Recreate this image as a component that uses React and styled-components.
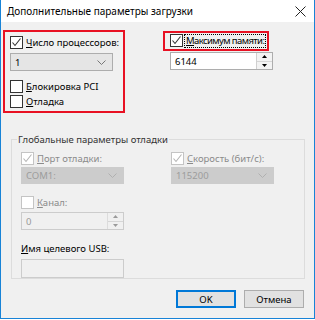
import React from "react";
import styled, { createGlobalStyle } from "styled-components";

const Global = createGlobalStyle`
  html, body { margin: 0; padding: 0; background: #ffffff; }
  body {
    font-family: "Noto Sans", "Liberation Sans", sans-serif;
    font-size: 9.5px;
    line-height: 13px;
    color: #000;
  }
`;

const Window = styled.div`
  width: 315px;
  height: 319px;
  box-sizing: border-box;
  border: 1px solid #1883d7;
  border-top: none;
  display: flex;
  flex-direction: column;
  background: #f0f0f0;
`;

const TitleBar = styled.div`
  height: 22px;
  background: #ffffff;
  display: flex;
  align-items: center;
  justify-content: space-between;
  padding: 0 8px 0 6px;
  font-size: 10px;
  color: #000;
  .close {
    display: flex;
  }
`;

const Body = styled.div`
  flex: 1;
  display: flex;
  flex-direction: column;
  padding: 8px 9px 0 2px;
`;

const TopRow = styled.div`
  display: flex;
  align-items: flex-start;
  gap: 38px;
`;

const Highlight = styled.div`
  border: 2px solid #e81123;
  box-sizing: border-box;
  width: ${(p) => p.$w}px;
  height: ${(p) => p.$h}px;
  padding: ${(p) => p.$pad};
  display: flex;
  flex-direction: column;
`;

const RightCol = styled.div`
  display: flex;
  flex-direction: column;
  padding-top: 1px;
`;

const CheckRow = styled.label`
  display: flex;
  align-items: center;
  height: 15px;
  margin-top: ${(p) => p.$mt || 0}px;
  color: ${(p) => (p.$disabled ? "#8b8b8b" : "#000")};
  white-space: nowrap;
  u {
    text-decoration: underline;
  }
  .text {
    padding: 0 1px;
    margin-left: 1px;
    border: 1px dotted ${(p) => (p.$focus ? "#000" : "transparent")};
    line-height: 12px;
    letter-spacing: ${(p) => (p.$tight ? "-0.6px" : "0")};
  }
`;

const Box = styled.span`
  width: 13px;
  height: 13px;
  box-sizing: border-box;
  border: 1px solid ${(p) => (p.$disabled ? "#c4c4c4" : "#333333")};
  background: #ffffff;
  display: inline-flex;
  align-items: center;
  justify-content: center;
  flex-shrink: 0;
`;

const Combo = styled.div`
  width: ${(p) => p.$w || 103}px;
  height: ${(p) => p.$h || 18}px;
  box-sizing: border-box;
  margin-top: ${(p) => p.$mt || 0}px;
  margin-left: ${(p) => p.$ml || 0}px;
  border: 1px solid ${(p) => (p.$disabled ? "#cccccc" : "#adadad")};
  background: ${(p) => (p.$disabled ? "#cccccc" : "#e5e5e5")};
  color: ${(p) => (p.$disabled ? "#9c9c9c" : "#000")};
  display: flex;
  align-items: center;
  justify-content: space-between;
  padding: 0 6px 0 4px;
`;

const Spin = styled.div`
  width: ${(p) => p.$w || 103}px;
  height: 18px;
  box-sizing: border-box;
  margin-top: ${(p) => p.$mt || 0}px;
  margin-left: ${(p) => p.$ml || 0}px;
  border: 1px solid ${(p) => (p.$disabled ? "#cccccc" : "#adadad")};
  background: ${(p) => (p.$disabled ? "#f0f0f0" : "#ffffff")};
  color: ${(p) => (p.$disabled ? "#9a9a9a" : "#000")};
  display: flex;
  align-items: stretch;
  .value {
    flex: 1;
    display: flex;
    align-items: center;
    padding-left: 4px;
  }
  .arrows {
    width: 15px;
    display: flex;
    flex-direction: column;
    border-left: 1px solid ${(p) => (p.$disabled ? "#dcdcdc" : "#d0d0d0")};
  }
`;

const SpinBtn = styled.span`
  flex: 1;
  display: flex;
  align-items: center;
  justify-content: center;
  background: ${(p) => (p.$disabled ? "#f0f0f0" : "#f3f3f3")};
  & + & {
    border-top: 1px solid #d6d6d6;
  }
`;

const Group = styled.fieldset`
  margin: 20px 0 0 8px;
  padding: 5px 0 0 9px;
  height: 146px;
  box-sizing: border-box;
  border: 1px solid #dcdcdc;
  legend {
    padding: 0 1px;
    margin-left: -4px;
    color: #333;
  }
`;

const GroupGrid = styled.div`
  display: grid;
  grid-template-columns: 150px 110px;
`;

const Col = styled.div`
  display: flex;
  flex-direction: column;
`;

const FieldLabel = styled.div`
  margin-top: ${(p) => p.$mt || 0}px;
  height: 15px;
  display: flex;
  align-items: center;
  color: #000;
  u { text-decoration: underline; }
`;

const TextBox = styled.div`
  width: 103px;
  height: 19px;
  box-sizing: border-box;
  margin-top: 3px;
  border: 1px solid #cccccc;
  background: #f0f0f0;
`;

const ButtonRow = styled.div`
  display: flex;
  justify-content: flex-end;
  gap: 8px;
  margin-top: 11px;
  padding-right: 1px;
`;

const Button = styled.button`
  width: 60px;
  height: 18px;
  box-sizing: border-box;
  padding: 0;
  font-family: inherit;
  font-size: 9.5px;
  color: #000;
  background: #e1e1e1;
  border: ${(p) => (p.$primary ? "2px solid #0078d7" : "1px solid #adadad")};
`;

const Check = ({ checked, disabled }) => (
  <Box $disabled={disabled}>
    {checked && (
      <svg width="11" height="11" viewBox="0 0 11 11">
        <path
          d="M1.5 5.5 L4 8.5 L9.5 1.5"
          fill="none"
          stroke={disabled ? "#b5b5b5" : "#333333"}
          strokeWidth="1.1"
        />
      </svg>
    )}
  </Box>
);

const Chevron = ({ disabled }) => (
  <svg width="9" height="5" viewBox="0 0 9 5">
    <path d="M0.5 0.5 L4.5 4.5 L8.5 0.5" fill="none" stroke={disabled ? "#b0b0b0" : "#777"} strokeWidth="1" />
  </svg>
);

const Tri = ({ up, disabled }) => (
  <svg width="5" height="3" viewBox="0 0 5 3">
    <path d={up ? "M0 3 L2.5 0 L5 3 Z" : "M0 0 L5 0 L2.5 3 Z"} fill={disabled ? "#9a9a9a" : "#000"} />
  </svg>
);

const SpinField = ({ value, disabled, ...rest }) => (
  <Spin $disabled={disabled} {...rest}>
    <span className="value">{value}</span>
    <span className="arrows">
      <SpinBtn $disabled={disabled}><Tri up disabled={disabled} /></SpinBtn>
      <SpinBtn $disabled={disabled}><Tri disabled={disabled} /></SpinBtn>
    </span>
  </Spin>
);

export default function App() {
  return (
    <>
      <Global />
      <Window>
        <TitleBar>
          <span>Дополнительные параметры загрузки</span>
          <span className="close">
            <svg width="11" height="11" viewBox="0 0 11 11">
              <path d="M0.5 0.5 L10.5 10.5 M10.5 0.5 L0.5 10.5" stroke="#222" strokeWidth="1" />
            </svg>
          </span>
        </TitleBar>
        <Body>
          <TopRow>
            <Highlight $w={122} $h={83} $pad="3px 0 0 5px">
              <CheckRow>
                <Check checked />
                <span className="text"><u>Ч</u>исло процессоров:</span>
              </CheckRow>
              <Combo $mt={3}>
                <span>1</span>
                <Chevron />
              </Combo>
              <CheckRow $mt={8}>
                <Check />
                <span className="text"><u>Б</u>локировка PCI</span>
              </CheckRow>
              <CheckRow>
                <Check />
                <span className="text"><u>О</u>тладка</span>
              </CheckRow>
            </Highlight>
            <RightCol>
              <Highlight $w={106} $h={20} $pad="0 0 0 5px">
                <CheckRow $focus $tight>
                  <Check checked />
                  <span className="text"><u>М</u>аксимум памяти:</span>
                </CheckRow>
              </Highlight>
              <SpinField value="6144" $ml={7} $mt={1} />
            </RightCol>
          </TopRow>

          <Group>
            <legend>Глобальные параметры отладки</legend>
            <GroupGrid>
              <Col>
                <CheckRow $disabled>
                  <Check checked disabled />
                  <span className="text"><u>П</u>орт отладки:</span>
                </CheckRow>
                <Combo $disabled $mt={1} $h={17}>
                  <span>COM1:</span>
                  <Chevron disabled />
                </Combo>
                <CheckRow $disabled $mt={11}>
                  <Check disabled />
                  <span className="text"><u>К</u>анал:</span>
                </CheckRow>
                <SpinField value="0" disabled $mt={2} />
                <FieldLabel $mt={11}>
                  <span><u>И</u>мя целевого USB:</span>
                </FieldLabel>
                <TextBox />
              </Col>
              <Col>
                <CheckRow $disabled>
                  <Check checked disabled />
                  <span className="text"><u>С</u>корость (бит/с):</span>
                </CheckRow>
                <Combo $disabled $mt={1} $h={17}>
                  <span>115200</span>
                  <Chevron disabled />
                </Combo>
              </Col>
            </GroupGrid>
          </Group>

          <ButtonRow>
            <Button $primary>OK</Button>
            <Button>Отмена</Button>
          </ButtonRow>
        </Body>
      </Window>
    </>
  );
}
